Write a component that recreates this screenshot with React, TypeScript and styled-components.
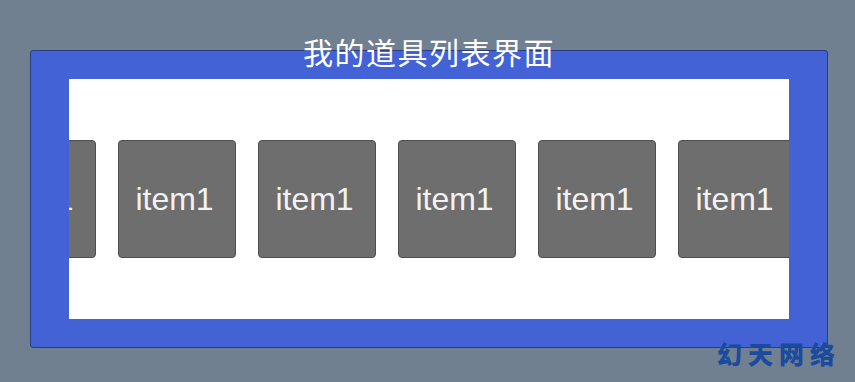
import React from "react";
import styled, { createGlobalStyle } from "styled-components";

const Global = createGlobalStyle`
  html, body { margin: 0; padding: 0; }
  body {
    background: #708090;
    width: 855px;
    height: 382px;
    overflow: hidden;
    font-family: "Liberation Sans", Arial, sans-serif;
  }
`;

const Stage = styled.div`
  position: relative;
  width: 855px;
  height: 382px;
  padding: 50px 0 0 30px;
  box-sizing: border-box;
`;

const Panel = styled.div`
  position: relative;
  width: 798px;
  height: 298px;
  box-sizing: border-box;
  background: #4262d5;
  border: 1px solid #2b3d80;
  border-radius: 3px;
  padding: 28px 38px;
`;

const Title = styled.div`
  position: absolute;
  left: 0;
  right: 0;
  top: -16px;
  text-align: center;
  color: #ffffff;
  font-family: "Noto Sans CJK SC", "Noto Sans", sans-serif;
  font-size: 30px;
  line-height: 32px;
  letter-spacing: 1.5px;
`;

const Viewport = styled.div`
  width: 720px;
  height: 240px;
  background: #ffffff;
  overflow: hidden;
`;

const Track = styled.div`
  display: flex;
  gap: 22px;
  padding-top: 61px;
  margin-left: -91px;
`;

const Item = styled.div`
  flex: 0 0 auto;
  width: 118px;
  height: 118px;
  box-sizing: border-box;
  background: #6e6e6e;
  border: 1px solid #4e4e4e;
  border-radius: 4px;
  padding-right: 5px;
  display: flex;
  align-items: center;
  justify-content: center;
  color: #f2f2f2;
  font-size: 32px;
  font-family: "Liberation Sans", Arial, sans-serif;
`;

const Watermark = styled.div`
  position: absolute;
  right: 14px;
  bottom: 15px;
  color: #1a4b9e;
  font-family: "Noto Sans CJK SC", sans-serif;
  font-weight: 900;
  font-size: 25px;
  line-height: 28px;
  letter-spacing: 6px;
`;

export default function App() {
  const items = Array.from({ length: 7 }, () => "item1");
  return (
    <>
      <Global />
      <Stage>
        <Panel>
          <Title>我的道具列表界面</Title>
          <Viewport>
            <Track>
              {items.map((t, i) => (
                <Item key={i}>{t}</Item>
              ))}
            </Track>
          </Viewport>
        </Panel>
        <Watermark>幻天网络</Watermark>
      </Stage>
    </>
  );
}
